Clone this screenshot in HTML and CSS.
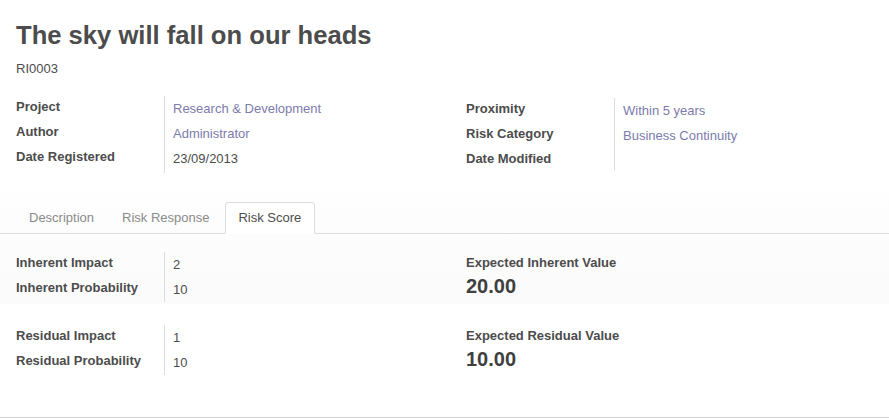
FILE: index.html
```html
<!DOCTYPE html>
<html>
<head>
<meta charset="utf-8">
<link rel="stylesheet" href="styles.css">
</head>
<body>
<div class="sheet">
  <div class="header">
    <h1 class="title">The sky will fall on our heads</h1>
    <div class="ref">RI0003</div>
  </div>

  <div class="cols info">
    <div class="group">
      <div class="labels">
        <div class="lrow">Project</div>
        <div class="lrow">Author</div>
        <div class="lrow">Date Registered</div>
      </div>
      <div class="values">
        <div class="vrow"><span class="link">Research &amp; Development</span></div>
        <div class="vrow"><span class="link">Administrator</span></div>
        <div class="vrow">23/09/2013</div>
      </div>
    </div>
    <div class="group group-right">
      <div class="labels">
        <div class="lrow">Proximity</div>
        <div class="lrow">Risk Category</div>
        <div class="lrow">Date Modified</div>
      </div>
      <div class="values">
        <div class="vrow"><span class="link">Within 5 years</span></div>
        <div class="vrow"><span class="link">Business Continuity</span></div>
        <div class="vrow"></div>
      </div>
    </div>
  </div>

  <div class="band">
    <ul class="tabs">
      <li class="tab">Description</li>
      <li class="tab">Risk Response</li>
      <li class="tab active">Risk Score</li>
    </ul>

    <div class="cols score first">
      <div class="group">
        <div class="labels">
          <div class="lrow">Inherent Impact</div>
          <div class="lrow">Inherent Probability</div>
        </div>
        <div class="values">
          <div class="vrow">2</div>
          <div class="vrow">10</div>
        </div>
      </div>
      <div class="expected">
        <div class="exp-label">Expected Inherent Value</div>
        <div class="exp-value">20.00</div>
      </div>
    </div>
  </div>

  <div class="cols score second">
    <div class="group">
      <div class="labels">
        <div class="lrow">Residual Impact</div>
        <div class="lrow">Residual Probability</div>
      </div>
      <div class="values">
        <div class="vrow">1</div>
        <div class="vrow">10</div>
      </div>
    </div>
    <div class="expected">
      <div class="exp-label">Expected Residual Value</div>
      <div class="exp-value">10.00</div>
    </div>
  </div>
</div>
</body>
</html>
```

FILE: styles.css
```css
* { box-sizing: border-box; }

html, body {
  margin: 0;
  padding: 0;
  background: #ffffff;
}

body {
  font-family: "Liberation Sans", Arial, sans-serif;
  font-size: 13px;
  line-height: 18px;
  color: #4c4c4c;
}

.sheet {
  height: 418px;
  border-bottom: 1px solid #cfcfcf;
  overflow: hidden;
}

.header {
  padding: 20px 16px 0 16px;
}

.title {
  margin: 0;
  font-size: 25.6px;
  line-height: 30px;
  font-weight: bold;
  color: #4c4c4c;
}

.ref {
  margin-top: 10px;
  font-size: 13px;
  line-height: 18px;
}

.cols {
  display: grid;
  grid-template-columns: 450px 1fr;
  padding-left: 16px;
}

.info {
  margin-top: 18px;
}

.group {
  display: flex;
  align-items: stretch;
}

.group-right {
  margin-top: 2px;
}

.labels {
  width: 148px;
  font-weight: bold;
}

.values {
  border-left: 1px solid #dcdcdc;
  padding-left: 8px;
  flex: 0 0 auto;
}

.lrow {
  height: 25px;
  padding-top: 2px;
  white-space: nowrap;
}

.vrow {
  height: 25px;
  padding-top: 4px;
  white-space: nowrap;
}

.group-right .values {
  height: 72px;
}

.link {
  color: #7c7bad;
}

.band {
  margin-top: 18px;
  padding-top: 11px;
  padding-bottom: 2px;
  background: linear-gradient(#fefefe, #fbfbfb);
}

.tabs {
  list-style: none;
  margin: 0;
  padding: 0 0 0 16px;
  display: flex;
  border-bottom: 1px solid #dddddd;
  height: 32px;
}

.tab {
  margin-right: 2px;
  margin-bottom: -1px;
  padding: 6px 12px;
  border: 1px solid transparent;
  border-radius: 4px 4px 0 0;
  color: #8a8a8a;
  height: 32px;
}

.tab.active {
  margin-left: 1px;
  padding-right: 13px;
  color: #4c4c4c;
  background: #ffffff;
  border-color: #dddddd;
  border-bottom-color: #ffffff;
}

.score.first {
  margin-top: 18px;
}

.score.second {
  margin-top: 21px;
}

.exp-label {
  font-weight: bold;
  padding-top: 2px;
}

.exp-value {
  margin-top: 2px;
  font-size: 20px;
  line-height: 24px;
  font-weight: bold;
  color: #3f3f3f;
}
```
